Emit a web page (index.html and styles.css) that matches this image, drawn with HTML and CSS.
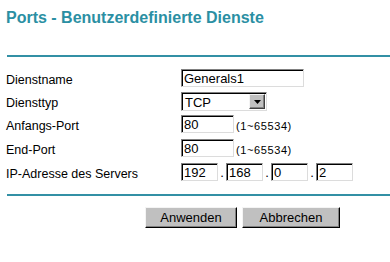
FILE: index.html
```html
<!DOCTYPE html>
<html lang="de">
<head>
  <meta charset="UTF-8">
  <meta name="viewport" content="width=device-width, initial-scale=1.0">
  <title>Ports - Benutzerdefinierte Dienste</title>
  <link rel="stylesheet" href="styles.css">
</head>
<body>
  <div class="page">
    <h1 class="title">Ports - Benutzerdefinierte Dienste</h1>
    <div class="rule"></div>

    <div class="form">
      <label class="label" for="serviceName">Dienstname</label>
      <div class="field">
        <input class="text name" id="serviceName" type="text" value="Generals1">
      </div>

      <label class="label">Diensttyp</label>
      <div class="field">
        <div class="select">
          <span class="select-value">TCP</span>
          <span class="select-btn">
            <svg width="7" height="4" viewBox="0 0 7 4"><path d="M0 0h7L3.5 4z" fill="#000"/></svg>
          </span>
        </div>
      </div>

      <label class="label" for="startPort">Anfangs-Port</label>
      <div class="field">
        <input class="text port" id="startPort" type="text" value="80">
        <span class="hint">(1~65534)</span>
      </div>

      <label class="label" for="endPort">End-Port</label>
      <div class="field">
        <input class="text port" id="endPort" type="text" value="80">
        <span class="hint">(1~65534)</span>
      </div>

      <label class="label">IP-Adresse des Servers</label>
      <div class="field">
        <input class="text ip" type="text" value="192">
        <span class="dot">.</span>
        <input class="text ip" type="text" value="168">
        <span class="dot">.</span>
        <input class="text ip" type="text" value="0">
        <span class="dot">.</span>
        <input class="text ip" type="text" value="2">
      </div>
    </div>

    <div class="rule rule-bottom"></div>

    <div class="actions">
      <button class="btn apply">Anwenden</button>
      <button class="btn cancel">Abbrechen</button>
    </div>
  </div>
</body>
</html>
```

FILE: styles.css
```css
body {
  margin: 0;
  background-color: #ffffff;
  color: #000000;
  font-family: "Liberation Sans", Arial, sans-serif;
}
.page {
  padding-left: 6px;
}
.title {
  margin: 0;
  padding-top: 9px;
  font-size: 16px;
  line-height: 18px;
  font-weight: bold;
  color: #2b8fa3;
}
.rule {
  height: 2px;
  margin-top: 28px;
  margin-left: 1px;
  background-color: #3390a5;
}
.rule-bottom {
  margin-top: 13px;
}
.form {
  display: grid;
  grid-template-columns: 175px auto;
  grid-template-rows: 23px 23px 24px 24px 18px;
  margin-top: 12px;
}
.label {
  font-size: 12.5px;
  line-height: 18px;
  padding-top: 2px;
}
.field {
  display: flex;
  align-items: flex-start;
}
.text {
  box-sizing: border-box;
  height: 18px;
  margin: 0;
  padding: 2px 2px 1px 2px;
  border: 1px solid;
  border-color: #808080 #dcdcdc #dcdcdc #808080;
  box-shadow: inset 1px 1px 0 #000000;
  background: #ffffff;
  font-family: "Liberation Sans", Arial, sans-serif;
  font-size: 13px;
  line-height: 15px;
  color: #000000;
  outline: none;
}
.name {
  width: 123px;
}
.port {
  width: 53px;
}
.ip {
  width: 37px;
}
.hint {
  margin-left: 2px;
  padding-top: 5px;
  font-size: 11px;
  line-height: 13px;
  letter-spacing: 0.6px;
}
.dot {
  width: 8px;
  text-align: center;
  font-size: 13px;
  line-height: 18px;
  padding-top: 1px;
}
.select {
  box-sizing: border-box;
  display: flex;
  align-items: center;
  justify-content: space-between;
  width: 86px;
  height: 19px;
  border: 1px solid;
  border-color: #808080 #dcdcdc #dcdcdc #808080;
  box-shadow: inset 1px 1px 0 #000000;
  padding: 1px 1px 1px 3px;
  background: #ffffff;
  font-size: 13px;
  line-height: 15px;
}
.select-value {
  padding-top: 2px;
}
.select-btn {
  box-sizing: border-box;
  display: flex;
  align-items: center;
  justify-content: center;
  width: 16px;
  height: 15px;
  background-color: #c0c0c0;
  border: 1px solid;
  border-color: #f4f4f4 #404040 #404040 #f4f4f4;
  box-shadow: inset -1px -1px 0 #808080;
}
.actions {
  display: flex;
  gap: 5px;
  margin-top: 11px;
  padding-left: 139px;
}
.btn {
  box-sizing: border-box;
  height: 21px;
  margin: 0;
  padding: 0;
  background-color: #c0c0c0;
  border: 1px solid;
  border-color: #f4f4f4 #000000 #000000 #f4f4f4;
  box-shadow: inset -1px -1px 0 #808080;
  font-family: "Liberation Sans", Arial, sans-serif;
  font-size: 13px;
  color: #000000;
}
.apply {
  width: 92px;
}
.cancel {
  width: 98px;
}
```
